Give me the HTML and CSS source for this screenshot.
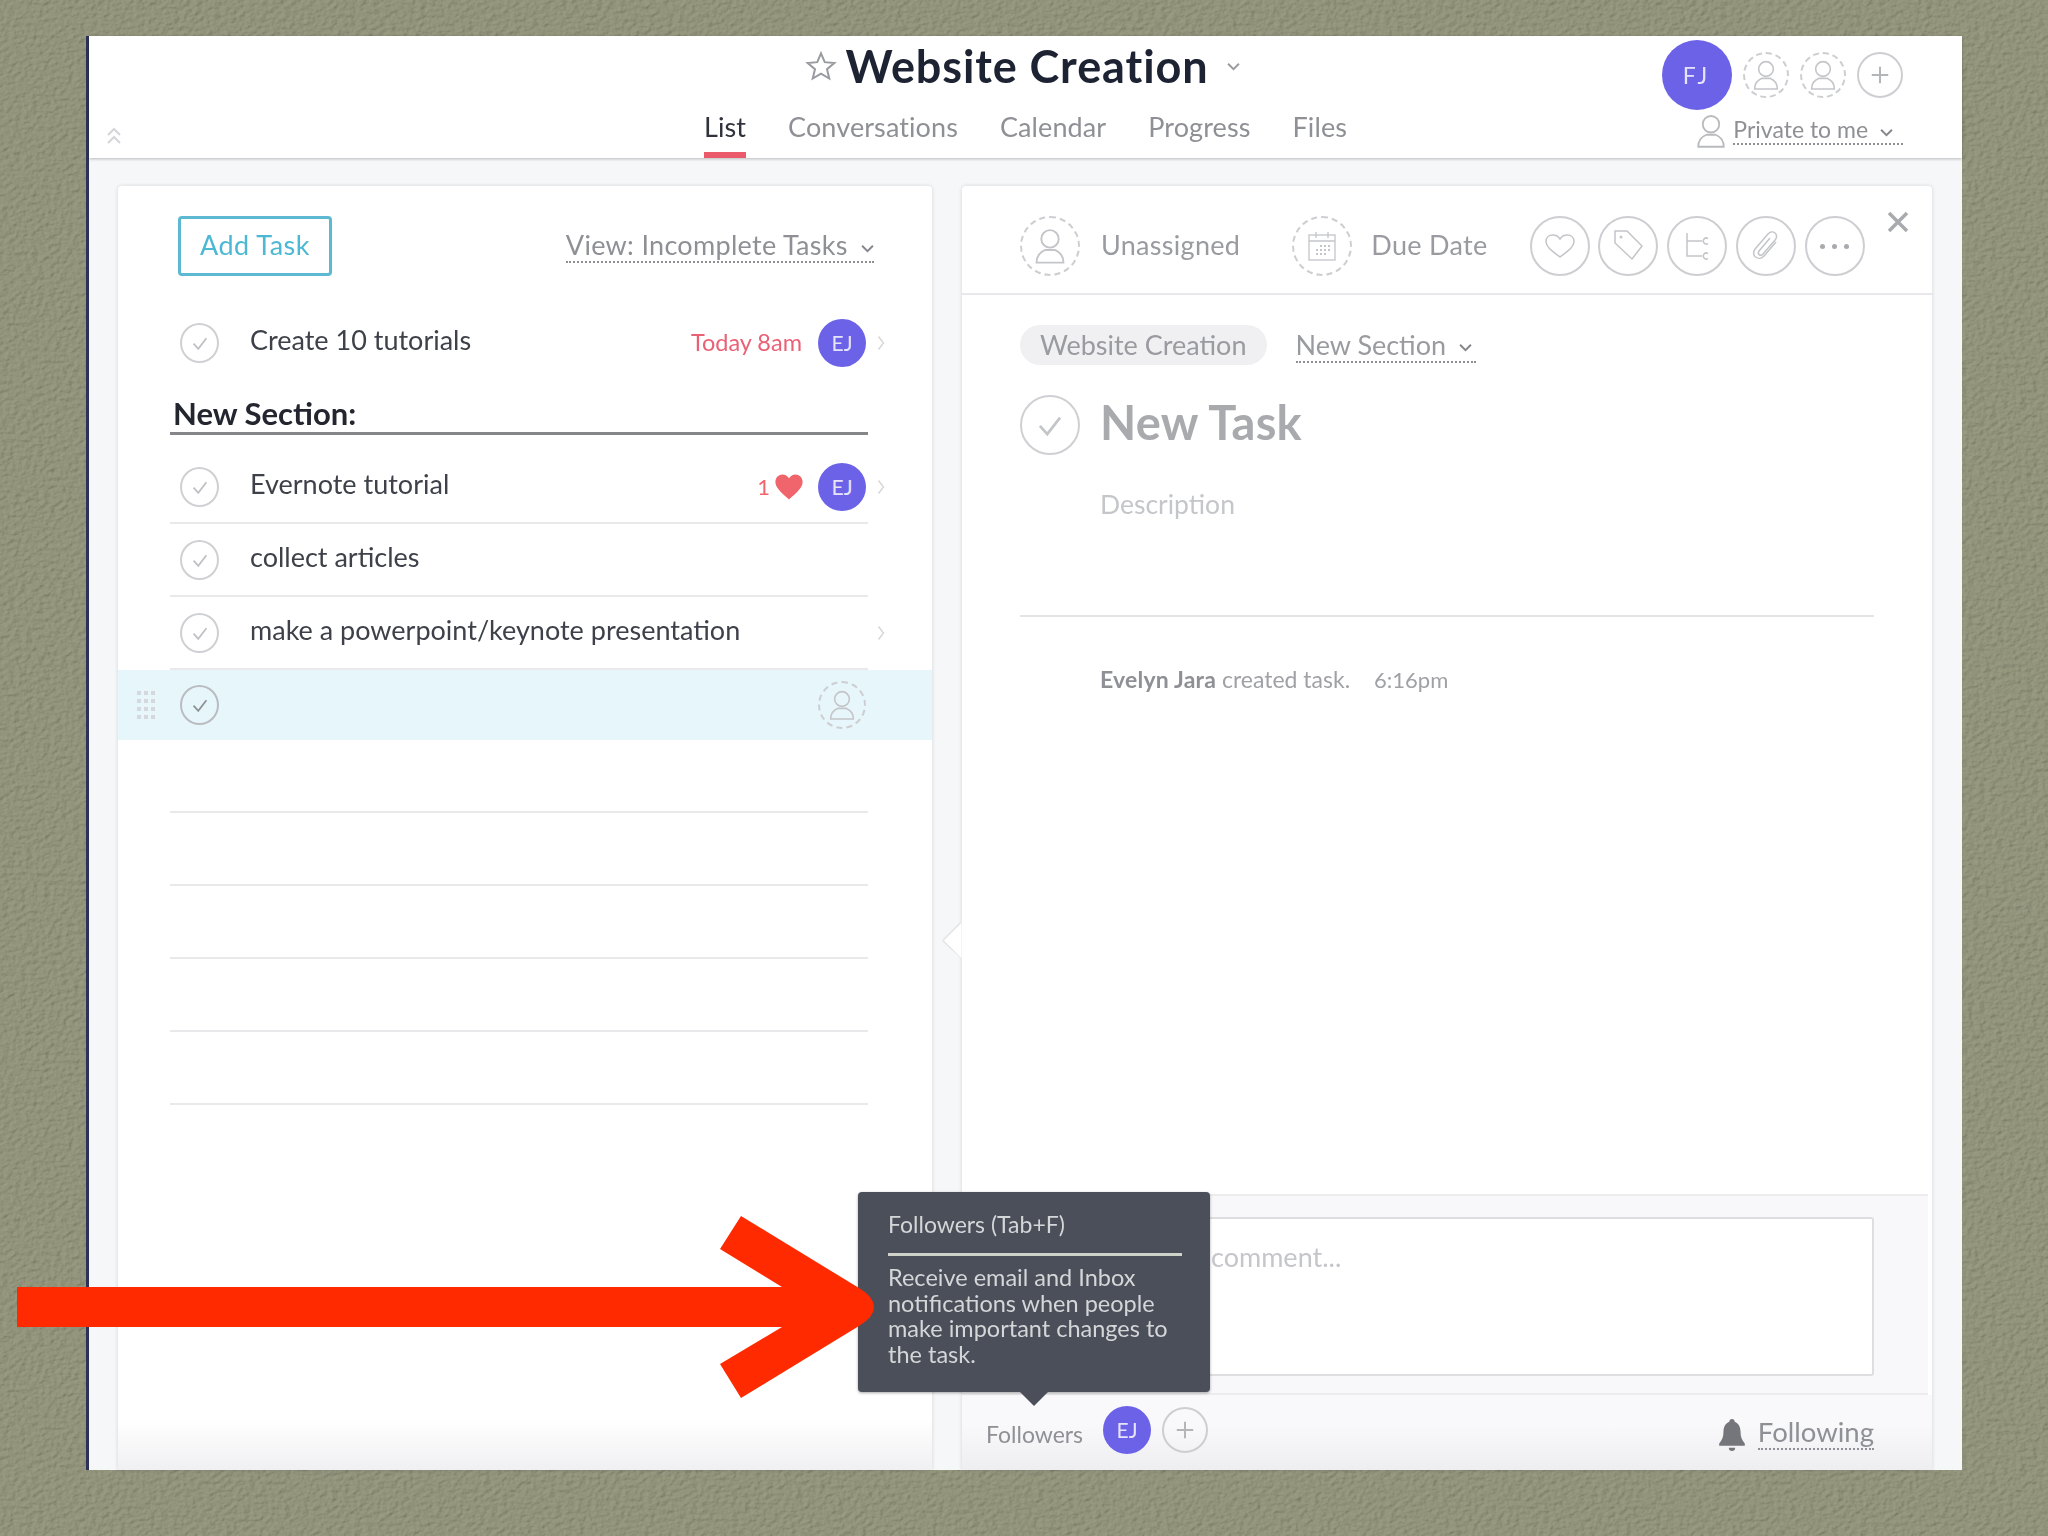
FILE: index.html
```html
<!DOCTYPE html>
<html lang="en">
<head>
  <meta charset="utf-8">
  <title>Website Creation</title>
  <link rel="stylesheet" href="styles.css">
</head>
<body>
  <!-- paper texture behind the window -->
  <svg class="paper" width="2048" height="1536" aria-hidden="true">
    <filter id="grain" x="0" y="0" width="100%" height="100%">
      <feTurbulence type="fractalNoise" baseFrequency="0.17 0.24" numOctaves="3" seed="7"/>
      <feDiffuseLighting surfaceScale="1.100" diffuseConstant="1.150" lighting-color="#91937a">
        <feDistantLight azimuth="35" elevation="62"/>
      </feDiffuseLighting>
    </filter>
    <rect width="2048" height="1536" filter="url(#grain)"/>
  </svg>

  <svg class="defs" width="0" height="0" aria-hidden="true">
    <symbol id="person" viewBox="0 0 24 24"><circle cx="12" cy="7.500" r="5.500" fill="none" stroke="currentColor" stroke-width="1.200"/><path d="M3.500 22.500c0-4.500 2.500-6.800 5.500-8h6c3 1.200 5.500 3.500 5.500 8z" fill="none" stroke="currentColor" stroke-width="1.200"/></symbol>
    <symbol id="check" viewBox="0 0 24 24"><path d="M6.500 12.500l4 4.500 7-9" fill="none" stroke="currentColor" stroke-width="1.500"/></symbol>
    <symbol id="plus" viewBox="0 0 24 24"><path d="M12 3v18M3 12h18" fill="none" stroke="currentColor" stroke-width="2.200"/></symbol>
    <symbol id="chev-down" viewBox="0 0 12 8"><path d="M1 1.500l5 5 5-5" fill="none" stroke="currentColor" stroke-width="1.800"/></symbol>
    <symbol id="chev-right" viewBox="0 0 8 16"><path d="M1.500 1.500L6.500 8l-5 6.500" fill="none" stroke="currentColor" stroke-width="1.400"/></symbol>
  </svg>

  <div class="window">
    <header class="topbar">
      <div class="topbar-left">
        <svg class="collapse" viewBox="0 0 16 18"><path d="M2 8l6-6 6 6M2 16l6-6 6 6" fill="none" stroke="currentColor" stroke-width="2"/></svg>
      </div>
      <div class="topbar-center">
        <div class="project-title">
          <svg class="star" viewBox="0 0 24 24"><path d="M12 2.500l2.800 6.600 7.200.6-5.500 4.700 1.700 7-6.200-3.700-6.200 3.700 1.700-7L2 9.700l7.200-.6z" fill="none" stroke="currentColor" stroke-width="1.500"/></svg>
          <h1>Website Creation</h1>
          <svg class="chev title-chev"><use href="#chev-down"/></svg>
        </div>
        <nav class="tabs">
          <a class="tab active">List</a>
          <a class="tab">Conversations</a>
          <a class="tab">Calendar</a>
          <a class="tab">Progress</a>
          <a class="tab">Files</a>
        </nav>
      </div>
      <div class="topbar-right">
        <div class="members">
          <span class="avatar avatar-lg">FJ</span>
          <span class="ring dashed"><svg class="ico-person"><use href="#person"/></svg></span>
          <span class="ring dashed"><svg class="ico-person"><use href="#person"/></svg></span>
          <span class="ring"><svg class="ico-plus"><use href="#plus"/></svg></span>
        </div>
        <div class="privacy">
          <svg class="privacy-person"><use href="#person"/></svg>
          <span class="dotted">Private to me <svg class="chev"><use href="#chev-down"/></svg></span>
        </div>
      </div>
    </header>

    <main class="content">
      <section class="panel list-panel">
        <div class="list-toolbar">
          <button class="add-task">Add Task</button>
          <span class="dotted view-filter">View: Incomplete Tasks <svg class="chev"><use href="#chev-down"/></svg></span>
        </div>

        <div class="row"><div class="row-inner no-line">
          <span class="check"><svg><use href="#check"/></svg></span>
          <span class="task-name">Create 10 tutorials</span>
          <span class="due">Today 8am</span>
          <span class="avatar">EJ</span>
          <svg class="row-chev"><use href="#chev-right"/></svg>
        </div></div>

        <h2 class="section-head">New Section:</h2>

        <div class="row"><div class="row-inner">
          <span class="check"><svg><use href="#check"/></svg></span>
          <span class="task-name">Evernote tutorial</span>
          <span class="likes">1<svg viewBox="0 0 24 22"><path d="M12 21.500C5 15.500.5 11.500.5 6.800.5 3 3.400.5 6.500.5c2.300 0 4.300 1.200 5.500 3.200C13.200 1.700 15.200.5 17.500.5c3.100 0 6 2.500 6 6.300 0 4.700-4.500 8.700-11.500 14.700z" fill="currentColor"/></svg></span>
          <span class="avatar">EJ</span>
          <svg class="row-chev"><use href="#chev-right"/></svg>
        </div></div>
        <div class="row"><div class="row-inner">
          <span class="check"><svg><use href="#check"/></svg></span>
          <span class="task-name">collect articles</span>
        </div></div>
        <div class="row"><div class="row-inner">
          <span class="check"><svg><use href="#check"/></svg></span>
          <span class="task-name">make a powerpoint/keynote presentation</span>
          <svg class="row-chev"><use href="#chev-right"/></svg>
        </div></div>
        <div class="row row-selected"><div class="row-inner no-line">
          <span class="grip"><i></i><i></i><i></i><i></i><i></i><i></i><i></i><i></i><i></i><i></i><i></i><i></i></span>
          <span class="check"><svg><use href="#check"/></svg></span>
          <span class="task-name"></span>
          <span class="ring dashed ring-row"><svg class="ico-person"><use href="#person"/></svg></span>
        </div></div>
        <div class="row"><div class="row-inner"></div></div>
        <div class="row"><div class="row-inner"></div></div>
        <div class="row"><div class="row-inner"></div></div>
        <div class="row"><div class="row-inner"></div></div>
        <div class="row"><div class="row-inner"></div></div>
      </section>

      <section class="panel detail-panel">
        <span class="notch"></span>
        <div class="detail-toolbar">
          <span class="ring dashed ring-big"><svg class="ico-person-big"><use href="#person"/></svg></span>
          <span class="field-label">Unassigned</span>
          <span class="ring dashed ring-big due-ring">
            <svg class="ico-calendar" viewBox="0 0 28 30"><g fill="none" stroke="currentColor" stroke-width="1.300"><rect x="1" y="4" width="26" height="25"/><path d="M1 10h26M8 1v6M20 1v6"/></g><path d="M12 14h2v2h-2zM16 14h2v2h-2zM20 14h2v2h-2zM8 18h2v2H8zM12 18h2v2h-2zM16 18h2v2h-2zM20 18h2v2h-2zM8 22h2v2H8zM12 22h2v2h-2zM16 22h2v2h-2z" fill="currentColor"/></svg>
          </span>
          <span class="field-label due-label">Due Date</span>
          <div class="actions">
            <span class="ring ring-big"><svg class="ico-action" viewBox="0 0 32 32"><path d="M16 27C8 21 2 17 2 11.500 2 7.500 5 5 8.800 5c2.900 0 5.700 1.500 7.200 4 1.500-2.500 4.300-4 7.200-4C27 5 30 7.500 30 11.500 30 17 24 21 16 27z" fill="none" stroke="currentColor" stroke-width="1.500"/></svg></span>
            <span class="ring ring-big"><svg class="ico-action" viewBox="0 0 32 32"><path d="M3 1h12l15 15-10 13L3 13z" fill="none" stroke="currentColor" stroke-width="1.500"/><circle cx="9" cy="7" r="1.500" fill="currentColor"/></svg></span>
            <span class="ring ring-big"><svg class="ico-action" viewBox="0 0 32 32"><path d="M6 3v23h15M6 11h15" fill="none" stroke="currentColor" stroke-width="1.500"/><path d="M27 8.500a3 3 0 1 0 0 5M27 23.500a3 3 0 1 0 0 5" fill="none" stroke="currentColor" stroke-width="1.500"/></svg></span>
            <span class="ring ring-big"><svg class="ico-action" viewBox="0 0 32 32"><path d="M26 12L14 26c-2.500 2.800-6 3-8.500 1S3 21.500 5.500 18.500L18 4c2-2.300 5-2.600 7-1s2.200 4.500.3 6.700L13 24c-1.200 1.400-2.800 1.500-3.900.6s-1-2.500.1-3.900L20 8" fill="none" stroke="currentColor" stroke-width="1.500"/></svg></span>
            <span class="ring ring-big"><span class="dots"><i></i><i></i><i></i></span></span>
          </div>
          <svg class="close" viewBox="0 0 22 22"><path d="M2 2l18 18M20 2L2 20" fill="none" stroke="currentColor" stroke-width="3.500"/></svg>
        </div>

        <div class="detail-body">
          <div class="crumbs">
            <span class="pill">Website Creation</span>
            <span class="dotted">New Section <svg class="chev"><use href="#chev-down"/></svg></span>
          </div>
          <div class="task-title">
            <span class="ring ring-big"><svg class="ico-check-big"><use href="#check"/></svg></span>
            <span class="task-title-text">New Task</span>
          </div>
          <p class="description">Description</p>
          <p class="activity"><b>Evelyn Jara</b> created task. <span class="time">6:16pm</span></p>
        </div>

        <div class="comment-box">
          <div class="comment-input">comment...</div>
        </div>
        <div class="followers">
          <span class="followers-label">Followers</span>
          <span class="avatar">EJ</span>
          <span class="ring"><svg class="ico-plus"><use href="#plus"/></svg></span>
          <span class="following">
            <svg class="bell" viewBox="0 0 24 30"><path d="M12 0c1.500 0 2.500 1 2.500 2.500C18.500 4 20 8 20 12c0 5 1.500 8 4 11v2H0v-2c2.500-3 4-6 4-11 0-4 1.500-8 5.500-9.500C9.500 1 10.500 0 12 0zM9 27h6c0 2-1.300 3-3 3s-3-1-3-3z" fill="currentColor"/></svg>
            <span class="dotted">Following</span>
          </span>
        </div>
      </section>
    </main>
  </div>

  <!-- tooltip over the followers row -->
  <div class="tooltip">
    <div class="tooltip-title">Followers (Tab+F)</div>
    <p>Receive email and Inbox notifications when people make important changes to the task.</p>
  </div>

  <!-- red annotation arrow -->
  <svg class="annotation" width="2048" height="1536" aria-hidden="true">
    <path d="M17 1287H782L720 1249 741 1216 859 1288Q874 1297 874 1307 874 1317 859 1326L741 1398 720 1364 782 1327H17z" fill="#ff2a00"/>
  </svg>
</body>
</html>
```

FILE: styles.css
```css
* {
  box-sizing: border-box;
}

html,
body {
  margin: 0;
  height: 1536px;
  overflow: hidden;
}

body {
  position: relative;
  padding: 36px 86px 66px 86px;
  background: #8c9175;
  font-family: Lato, "Liberation Sans", sans-serif;
  color: #8f9095;
}

.paper {
  position: absolute;
  left: 0;
  top: 0;
}

.defs {
  position: absolute;
}

.annotation {
  position: absolute;
  left: 0;
  top: 0;
  pointer-events: none;
}

svg {
  display: block;
}

/* window */
.window {
  position: relative;
  display: flex;
  flex-direction: column;
  height: 1434px;
  background: #f6f7f9;
  border-left: 3px solid #2d3358;
  filter: blur(0.5px);
}

.topbar {
  display: grid;
  grid-template-columns: 1fr auto 1fr;
  height: 122px;
  background: #fff;
  box-shadow: 0 1px 3px rgba(0, 0, 0, 0.25);
  z-index: 2;
}

.topbar-left {
  display: flex;
  align-items: flex-end;
  padding: 0 0 13px 17px;
}

.collapse {
  width: 16px;
  height: 18px;
  color: #d4d5d8;
}

.topbar-center {
  display: flex;
  flex-direction: column;
  align-items: center;
  padding-top: 3px;
}

.project-title {
  display: flex;
  align-items: center;
  height: 54px;
}

.project-title h1 {
  margin: 0;
  font-size: 45px;
  font-weight: 700;
  line-height: 54px;
  letter-spacing: 0.9px;
  color: #1d2333;
}

.star {
  width: 32px;
  height: 32px;
  margin-right: 8px;
  color: #9a9ba0;
}

.chev {
  display: inline-block;
  width: 13px;
  height: 9px;
  margin-left: 6px;
  vertical-align: middle;
  color: #85868b;
}

.title-chev {
  margin: 0 6px 0 18px;
  color: #9a9ba0;
}

.tabs {
  display: flex;
  gap: 42px;
  margin-top: 13px;
}

.tab {
  height: 52px;
  font-size: 27px;
  line-height: 42px;
  letter-spacing: 0.1px;
  color: #8f9095;
}

.tab.active {
  color: #30333b;
  border-bottom: 6px solid #ea5a6b;
}

.topbar-right {
  display: flex;
  flex-direction: column;
  align-items: flex-end;
  padding: 4px 59px 0 0;
}

.members {
  display: flex;
  align-items: center;
  gap: 11px;
}

.privacy {
  display: flex;
  align-items: flex-start;
  gap: 4px;
  margin-top: 5px;
  font-size: 23px;
  line-height: 28px;
}

.privacy-person {
  width: 36px;
  height: 36px;
  margin-top: -2px;
  color: #b9babe;
}

.dotted {
  border-bottom: 2px dotted #8f9095;
  white-space: nowrap;
}

.privacy .dotted {
  padding-right: 10px;
}

/* avatars and circles */
.avatar {
  display: flex;
  align-items: center;
  justify-content: center;
  flex: none;
  width: 48px;
  height: 48px;
  border-radius: 50%;
  background: #6c62e8;
  color: #e6e4fb;
  font-size: 21px;
}

.avatar-lg {
  width: 70px;
  height: 70px;
  font-size: 23px;
  letter-spacing: 4px;
}

.ring {
  display: flex;
  align-items: center;
  justify-content: center;
  flex: none;
  width: 46px;
  height: 46px;
  border: 2px solid #cdced1;
  border-radius: 50%;
  color: #c4c5c9;
}

.ring.dashed {
  border: 2px dashed #cdced1;
}

.ring-big {
  width: 60px;
  height: 60px;
}

.ico-person {
  width: 32px;
  height: 32px;
}

.ico-plus {
  width: 22px;
  height: 22px;
  color: #b4b5b9;
}

.ico-person-big {
  width: 38px;
  height: 38px;
}

.ico-calendar {
  width: 28px;
  height: 30px;
}

.ico-action {
  width: 32px;
  height: 32px;
}

.ico-check-big {
  width: 44px;
  height: 44px;
}

.dots {
  display: flex;
  gap: 7px;
}

.dots i {
  width: 5px;
  height: 5px;
  border-radius: 50%;
  background: #a9aaae;
}

/* panels */
.content {
  flex: 1;
  display: flex;
  gap: 30px;
  min-height: 0;
  padding: 28px 30px 0 29px;
}

.panel {
  position: relative;
  background: #fff;
  border-radius: 4px 4px 0 0;
  box-shadow: 0 0 4px rgba(0, 0, 0, 0.14);
}

.list-panel {
  width: 814px;
  background: linear-gradient(to bottom, #fff 96%, #f0f0f2 100%);
}

.detail-panel {
  flex: 1;
  display: flex;
  flex-direction: column;
}

.notch {
  position: absolute;
  left: -13px;
  top: 742px;
  width: 25px;
  height: 25px;
  background: #fff;
  transform: rotate(45deg);
  box-shadow: -1px 1px 2px rgba(0, 0, 0, 0.12);
  clip-path: polygon(-10% -10%, 100% 100%, -10% 110%);
}

/* task list */
.list-toolbar {
  display: flex;
  align-items: center;
  justify-content: space-between;
  height: 60px;
  margin: 30px 58px 30px 60px;
}

.add-task {
  width: 154px;
  height: 60px;
  padding: 0 0 3px;
  background: #fff;
  border: 3px solid #5db9d2;
  border-radius: 4px;
  font-family: inherit;
  font-size: 27px;
  letter-spacing: 0.5px;
  color: #4db8d4;
}

.view-filter {
  font-size: 27px;
  line-height: 32px;
  letter-spacing: 0.3px;
}

.row {
  height: 73px;
}

.row-inner {
  position: relative;
  display: flex;
  align-items: center;
  height: 100%;
  margin: 0 64px 0 52px;
  padding: 0 0 0 10px;
  border-bottom: 2px solid #e9e9ec;
}

.row-inner.no-line {
  border-bottom: 0;
}

.row-selected {
  height: 70px;
  background: #e7f6fb;
}

.check {
  display: flex;
  align-items: center;
  justify-content: center;
  flex: none;
  width: 39px;
  height: 40px;
  border: 2px solid #cfd0d3;
  border-radius: 50%;
  color: #bfc0c4;
}

.check svg {
  width: 28px;
  height: 28px;
}

.row-selected .check {
  border-color: #b9bcc0;
  color: #8f9297;
}

.task-name {
  flex: 1;
  margin: -6px 0 0 31px;
  font-size: 27px;
  color: #3e4149;
}

.due {
  margin: -2px 16px 0 0;
  font-size: 23.500px;
  color: #ea6175;
}

.likes {
  display: flex;
  align-items: center;
  margin-right: 14px;
  font-size: 22px;
  color: #f0646c;
}

.likes svg {
  width: 30px;
  height: 26px;
  margin-left: 4px;
}

.row-chev {
  width: 8px;
  height: 16px;
  margin: 0 -17px 0 11px;
  color: #d5d6d9;
}

.ring-row {
  width: 48px;
  height: 48px;
  margin-right: 2px;
}

.section-head {
  display: flex;
  align-items: flex-end;
  height: 56px;
  margin: 0 64px 16px 52px;
  padding: 0 0 1px 3px;
  border-bottom: 3px solid #85868a;
  font-size: 31px;
  font-weight: 700;
  line-height: 36px;
  color: #23262f;
}

.grip {
  position: absolute;
  left: -33px;
  top: 21px;
  display: grid;
  grid-template-columns: repeat(3, 4px);
  gap: 4px 3px;
}

.grip i {
  height: 4px;
  background: #d5d9dd;
}

/* task detail */
.detail-toolbar {
  display: flex;
  align-items: flex-start;
  height: 109px;
  padding: 30px 0 0 58px;
  border-bottom: 2px solid #e8e8ec;
}

.field-label {
  margin-left: 21px;
  font-size: 27px;
  line-height: 58px;
  letter-spacing: 0.3px;
  color: #9a9ba0;
}

.due-ring {
  margin-left: 52px;
}

.due-label {
  margin-left: 19px;
}

.actions {
  display: flex;
  gap: 8.750px;
  margin-left: 42px;
}

.close {
  width: 22px;
  height: 22px;
  margin: -5px 0 0 22px;
  color: #a9aaae;
}

.detail-body {
  flex: 1;
  padding: 30px 58px 0;
}

.crumbs {
  display: flex;
  align-items: center;
  gap: 29px;
  height: 40px;
  font-size: 27px;
  color: #9a9ba0;
}

.crumbs .dotted {
  padding-right: 4px;
}

.pill {
  padding: 0 20px;
  background: #f0f0f2;
  border-radius: 20px;
  line-height: 40px;
}

.task-title {
  display: flex;
  align-items: center;
  gap: 20px;
  margin-top: 30px;
  font-size: 47px;
  font-weight: 700;
  letter-spacing: 0.3px;
  color: #a9aaae;
}

.task-title .ring {
  border-color: #cfd0d3;
}

.task-title-text {
  margin-top: -7px;
}

.description {
  height: 126px;
  margin: 34px 0 0;
  padding-left: 80px;
  font-size: 26.500px;
  line-height: 30px;
  color: #c5c6ca;
}

.activity {
  margin: 0;
  padding: 49px 0 0 80px;
  border-top: 2px solid #e4e4e7;
  font-size: 23px;
  line-height: 26px;
  color: #a0a1a6;
}

.activity b {
  font-weight: 700;
  letter-spacing: 0.2px;
  color: #8f9095;
}

.time {
  margin-left: 18px;
  font-size: 22px;
}

.comment-box {
  height: 201px;
  margin-right: 4px;
  padding: 21px 54px 0 228px;
  background: #f8f8fa;
  border-top: 2px solid #ececef;
  border-bottom: 2px solid #ececef;
}

.comment-input {
  height: 159px;
  padding: 21px 0 0 19px;
  background: #fff;
  border: 2px solid #dedee1;
  border-radius: 3px;
  font-size: 27px;
  color: #c5c6ca;
}

.followers {
  display: flex;
  align-items: center;
  flex: none;
  gap: 11px;
  height: 75px;
  padding: 0 58px 0 24px;
  background: linear-gradient(to bottom, #f9f9fb 40%, #eeeef0 100%);
}

.followers-label {
  margin: 3px 9px 0 0;
  font-size: 23px;
  color: #8f9095;
}

.followers .avatar,
.followers .ring {
  margin-top: -6px;
}

.following {
  display: flex;
  align-items: center;
  gap: 12px;
  margin-left: auto;
  font-size: 27.500px;
  color: #8f9095;
}

.bell {
  width: 28px;
  height: 32px;
  margin-top: 4px;
  color: #74767b;
}

/* tooltip */
.tooltip {
  position: absolute;
  left: 858px;
  top: 1192px;
  width: 352px;
  height: 200px;
  padding: 18px 24px 0 30px;
  background: #4a4f5a;
  border-radius: 4px;
  box-shadow: 0 1px 3px rgba(0, 0, 0, 0.35);
  color: #d4d6d8;
  font-size: 23.500px;
  filter: blur(0.4px);
}

.tooltip::after {
  content: "";
  position: absolute;
  left: 162px;
  bottom: -14px;
  border-left: 14px solid transparent;
  border-right: 14px solid transparent;
  border-top: 14px solid #4a4f5a;
}

.tooltip-title {
  height: 46px;
  margin-right: 4px;
  font-size: 23px;
  line-height: 28px;
  border-bottom: 3px solid #cfd3c9;
}

.tooltip p {
  margin: 9px 0 0;
  line-height: 25.500px;
}
```
